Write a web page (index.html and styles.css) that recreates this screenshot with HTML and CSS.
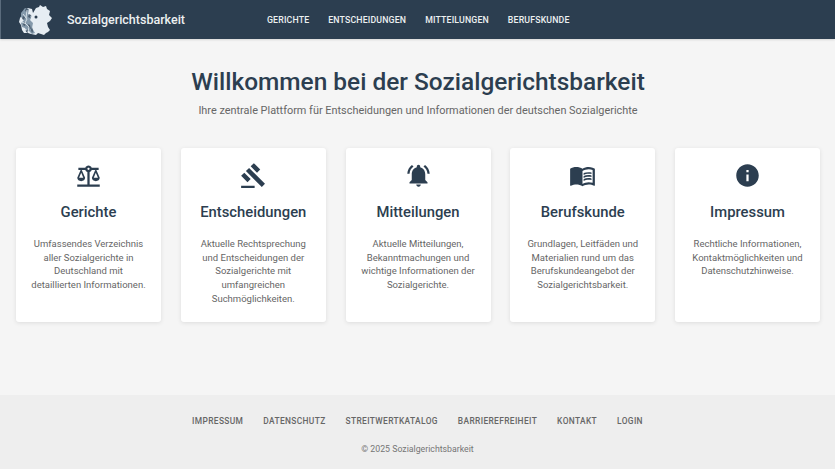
FILE: index.html
```html
<!DOCTYPE html>
<html lang="de">
<head>
<meta charset="utf-8">
<title>Sozialgerichtsbarkeit</title>
<link rel="stylesheet" href="styles.css">
</head>
<body>
<header class="topbar">
  <a class="brand" href="#">
    <svg class="logo" viewBox="0 0 36 32" aria-hidden="true">
      <path fill="#e6edf3" d="M19 4l3-1 1-2 3 2 3-1 1 3 3 2-1 4 3 3-2 3-3 2 1 4 2 3-2 2-2 1-2 2-6-2-2 2-5-1-3-1-4 0-2-3-1-5-2-3 1-4 2-3 1-3 3-3 2-1 4 1 1 4z"/>
      <path fill="#8499ab" d="M4 9l4-5 4 1-1 5 4 2-2 4 3 3-1 5 3 5-3 1-3-3-3 1-1-4-3-1-1-4 3-3-3-3z"/>
      <path fill="#2c3e50" opacity=".65" d="M9 4l2 1-1 3-2-1zM12 10l2 1-1 3-2-1zM6 12l2 1-1 3-2-1zM7 18l2 1-1 3-2-1zM11 20l2 1 1 4-2-1zM15 23l1 4-1 2-1-3zM9 25l2 1 0 3-2-1z"/>
      <circle cx="19" cy="13" r="1.500" fill="#2c3e50"/>
      <path stroke="#e6edf3" stroke-width=".8" fill="none" d="M6 10l4 5-2 4 4 4-1 5M10 6l-1 8M3 17l6 3M14 12l2 6M5 24l5 2"/>
    </svg>
    <span>Sozialgerichtsbarkeit</span>
  </a>
  <nav class="mainnav">
    <a href="#">Gerichte</a>
    <a href="#">Entscheidungen</a>
    <a href="#">Mitteilungen</a>
    <a href="#">Berufskunde</a>
  </nav>
</header>
<main class="content">
  <h1>Willkommen bei der Sozialgerichtsbarkeit</h1>
  <p class="lead">Ihre zentrale Plattform für Entscheidungen und Informationen der deutschen Sozialgerichte</p>
  <section class="cards">
    <article class="card">
      <svg class="icon" viewBox="0 0 24 24" aria-hidden="true"><path d="M13 20V8.830C13.850 8.530 14.530 7.850 14.830 7H18l-3 7c0 1.660 1.570 3 3.500 3s3.500-1.340 3.500-3l-3-7h2V5h-6.170c-.410-1.170-1.520-2-2.830-2s-2.420.830-2.830 2H3v2h2l-3 7c0 1.660 1.570 3 3.500 3S9 15.660 9 14L6 7h3.170c.300.850.980 1.530 1.830 1.830V20H2v2h20v-2h-9zm7.370-6h-3.740L18.500 9.630 20.370 14zm-13 0H3.630L5.500 9.630 7.370 14zM12 7c-.550 0-1-.450-1-1s.450-1 1-1 1 .450 1 1-.450 1-1 1z"/></svg>
      <h2>Gerichte</h2>
      <p>Umfassendes Verzeichnis aller Sozialgerichte in Deutschland mit detaillierten Informationen.</p>
    </article>
    <article class="card">
      <svg class="icon" viewBox="0 0 24 24" aria-hidden="true"><path d="M1 21h12v2H1v-2zM5.245 8.070l2.830-2.827 14.140 14.142-2.828 2.828L5.245 8.070zM12.317 1l5.657 5.656-2.830 2.830-5.654-5.660L12.317 1zM3.825 9.485l5.657 5.657-2.828 2.828-5.657-5.657 2.828-2.828z"/></svg>
      <h2>Entscheidungen</h2>
      <p>Aktuelle Rechtsprechung und Entscheidungen der Sozialgerichte mit umfangreichen Suchmöglichkeiten.</p>
    </article>
    <article class="card">
      <svg class="icon" viewBox="0 0 24 24" aria-hidden="true"><path d="M7.580 4.080L6.150 2.650C3.750 4.480 2.170 7.300 2.030 10.500h2c.150-2.650 1.510-4.970 3.550-6.420zm12.390 6.420h2c-.150-3.200-1.730-6.020-4.120-7.850l-1.420 1.430c2.020 1.450 3.390 3.770 3.540 6.420zM18 11c0-3.070-1.640-5.640-4.500-6.320V4c0-.830-.670-1.500-1.500-1.500s-1.500.670-1.500 1.500v.680C7.630 5.360 6 7.920 6 11v5l-2 2v1h16v-1l-2-2v-5zm-6 11c.140 0 .270-.010.400-.040.650-.140 1.180-.580 1.440-1.180.100-.240.150-.500.150-.780h-4c.010 1.100.900 2 2.010 2z"/></svg>
      <h2>Mitteilungen</h2>
      <p>Aktuelle Mitteilungen, Bekanntmachungen und wichtige Informationen der Sozialgerichte.</p>
    </article>
    <article class="card">
      <svg class="icon" viewBox="0 0 24 24" aria-hidden="true"><path d="M21 5c-1.110-.350-2.330-.500-3.500-.500-1.950 0-4.050.400-5.500 1.500-1.450-1.100-3.550-1.500-5.500-1.500S2.450 4.900 1 6v14.650c0 .250.250.500.500.500.100 0 .150-.050.250-.050C3.100 20.450 5.050 20 6.500 20c1.950 0 4.050.400 5.500 1.500 1.350-.850 3.800-1.500 5.500-1.500 1.650 0 3.350.300 4.750 1.050.100.050.150.050.250.050.250 0 .500-.250.500-.500V6c-.600-.450-1.250-.750-2-1zm0 13.500c-1.100-.350-2.300-.500-3.500-.500-1.700 0-4.150.650-5.500 1.500V8c1.350-.850 3.800-1.500 5.500-1.500 1.200 0 2.400.150 3.500.500v11.500z"/><path d="M17.500 10.500c.880 0 1.730.090 2.500.260V9.240c-.790-.150-1.640-.240-2.500-.240-1.700 0-3.240.290-4.500.830v1.660c1.130-.640 2.700-.990 4.500-.990zM13 12.490v1.660c1.130-.640 2.700-.990 4.500-.990.880 0 1.730.090 2.500.260V11.900c-.790-.150-1.640-.240-2.500-.240-1.700 0-3.240.300-4.500.830zM17.500 14.330c-1.700 0-3.240.290-4.500.830v1.660c1.130-.640 2.700-.990 4.500-.990.880 0 1.730.090 2.500.260v-1.520c-.790-.160-1.640-.240-2.500-.240z"/></svg>
      <h2>Berufskunde</h2>
      <p>Grundlagen, Leitfäden und Materialien rund um das Berufskundeangebot der Sozialgerichtsbarkeit.</p>
    </article>
    <article class="card">
      <svg class="icon" viewBox="0 0 24 24" aria-hidden="true"><path d="M12 2C6.480 2 2 6.480 2 12s4.480 10 10 10 10-4.480 10-10S17.520 2 12 2zm1 15h-2v-6h2v6zm0-8h-2V7h2v2z"/></svg>
      <h2>Impressum</h2>
      <p>Rechtliche Informationen, Kontaktmöglichkeiten und Datenschutzhinweise.</p>
    </article>
  </section>
</main>
<footer class="footer">
  <nav class="footnav">
    <a href="#">Impressum</a>
    <a href="#">Datenschutz</a>
    <a href="#">Streitwertkatalog</a>
    <a href="#">Barrierefreiheit</a>
    <a href="#">Kontakt</a>
    <a href="#">Login</a>
  </nav>
  <p class="copy">© 2025 Sozialgerichtsbarkeit</p>
</footer>
</body>
</html>
```
FILE: styles.css
```css
* { box-sizing: border-box; }
html, body { margin: 0; height: 100%; }
body {
  font-family: Roboto, "Liberation Sans", sans-serif;
  background: #f5f5f5;
  color: #2c3e50;
  display: flex;
  flex-direction: column;
  min-height: 469px;
  overflow: hidden;
}
a { text-decoration: none; color: inherit; }
.topbar {
  height: 39px;
  background: #2c3e50;
  border-left: 1px solid #5a6b7c;
  display: flex;
  align-items: center;
  padding-left: 16px;
  box-shadow: 0 1px 2px rgba(0,0,0,.12);
}
.brand { display: flex; align-items: center; width: 250px; color: #ecf0f1; font-size: 12.500px; font-weight: 500; }
.logo { width: 36px; height: 32px; margin-right: 14px; }
.mainnav { display: flex; gap: 19px; }
.mainnav a {
  color: #ecf0f1;
  font-size: 8.750px;
  font-weight: 500;
  text-transform: uppercase;
  letter-spacing: .16px;
}
.content { flex: 1; padding: 27px 15px 0 16px; }
h1 { margin: 0; font-size: 24.450px; font-weight: 500; line-height: 32px; text-align: center; }
.lead { margin: 5px 0 0; font-size: 10.900px; line-height: 16px; text-align: center; color: #666; }
.cards { margin-top: 29px; display: grid; grid-template-columns: repeat(5, 145px); justify-content: space-between; }
.card {
  height: 174px;
  background: #fff;
  border-radius: 3px;
  box-shadow: 0 1px 4px rgba(0,0,0,.1);
  padding: 14px 14px 0;
  text-align: center;
}
.icon { display: block; width: 27px; height: 27px; margin: 0 auto; fill: #2c3e50; }
h2 { margin: 13px 0 0; font-size: 14.800px; font-weight: 500; line-height: 20px; }
.card p { margin: 15px 0 0; font-size: 9.500px; line-height: 13.700px; color: #666; }
.footer { height: 74px; background: #eeeeee; padding-top: 20px; text-align: center; }
.footnav { display: flex; justify-content: center; gap: 20px; }
.footnav a { font-size: 8.400px; font-weight: 500; text-transform: uppercase; letter-spacing: .36px; color: #666; line-height: 12px; }
.copy { margin: 16px 0 0; font-size: 8.750px; line-height: 12px; color: #757575; }
```
